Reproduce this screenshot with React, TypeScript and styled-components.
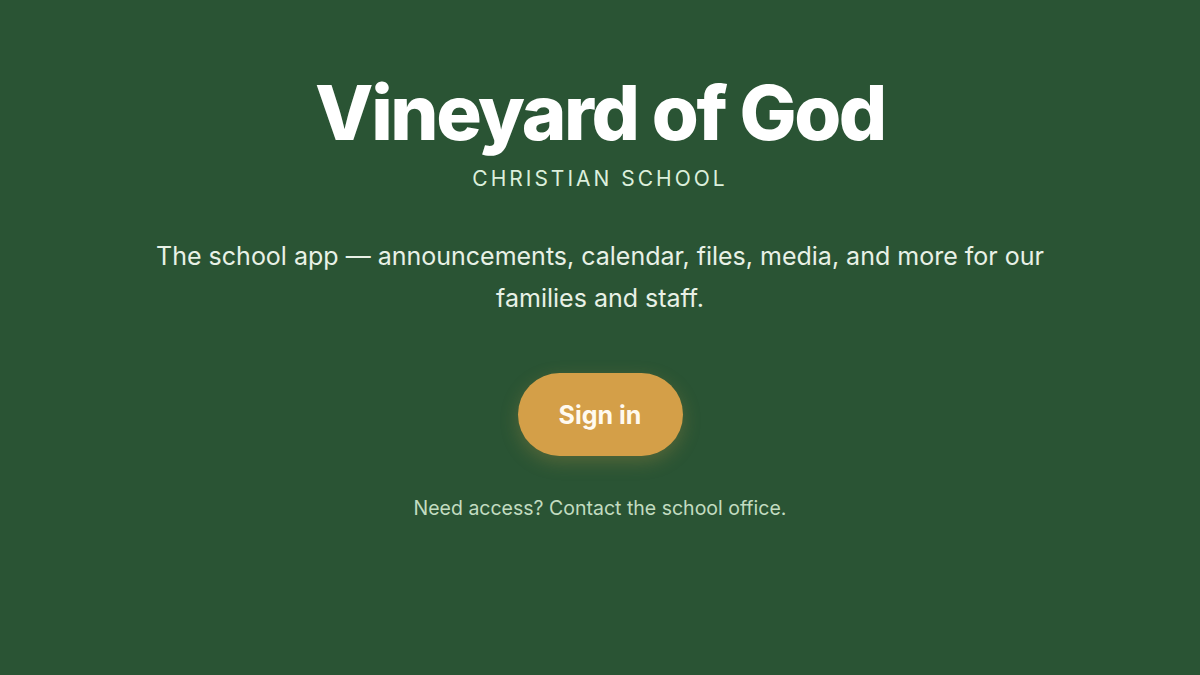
import { FC } from "react";
import styled, { createGlobalStyle } from "styled-components";

const GlobalStyle = createGlobalStyle`
  html, body {
    margin: 0;
    padding: 0;
    background-color: #2a5434;
  }
  body {
    font-family: Inter, "Noto Sans", sans-serif;
  }
`;

const Page = styled.main`
  display: flex;
  flex-direction: column;
  align-items: center;
  min-height: 675px;
  padding-top: 66px;
  box-sizing: border-box;
  background-color: #2a5434;
  text-align: center;
`;

const Title = styled.h1`
  margin: 0;
  font-size: 76px;
  font-weight: 800;
  line-height: 92px;
  letter-spacing: -2.4px;
  color: #ffffff;
`;

const Subtitle = styled.div`
  margin-top: 8px;
  font-size: 21px;
  font-weight: 400;
  letter-spacing: 3px;
  color: #dcefdc;
`;

const Tagline = styled.p`
  max-width: 930px;
  margin: 44px 0 0;
  font-size: 25px;
  line-height: 42px;
  color: #e8f1e6;
`;

//Button style
const SignIn = styled.button`
  margin-top: 54px;
  width: 165px;
  height: 83px;
  border: none;
  border-radius: 42px;
  font-family: inherit;
  font-size: 25px;
  font-weight: 700;
  color: #fffaf0;
  background-color: #d49f48;
  box-shadow: 0 6px 18px rgba(212, 159, 72, 0.25);
  cursor: pointer;
`;

const Note = styled.div`
  margin-top: 40px;
  font-size: 19.5px;
  color: #c2dcc0;
`;

const App: FC = () => {
  return (
    <>
      <GlobalStyle />
      <Page>
        <Title>Vineyard of God</Title>
        <Subtitle>CHRISTIAN SCHOOL</Subtitle>
        <Tagline>
          The school app — announcements, calendar, files, media, and more for
          our families and staff.
        </Tagline>
        <SignIn>Sign in</SignIn>
        <Note>Need access? Contact the school office.</Note>
      </Page>
    </>
  );
};

export default App;
